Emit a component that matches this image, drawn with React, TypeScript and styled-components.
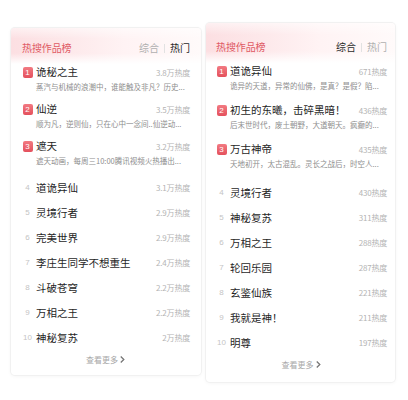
import styled, { createGlobalStyle } from "styled-components";

type Item = {
  title: string;
  heat: string;
  desc?: string;
};

type Layout = {
  top: number;
  width: number;
  padX: number;
  padRight: number;
  headTop: number;
  headH: number;
  rankedH: number;
  descLh: number;
  bottom: number;
};

const LEFT_ITEMS: Item[] = [
  { title: "诡秘之主", heat: "3.8万热度", desc: "蒸汽与机械的浪潮中，谁能触及非凡？历史..." },
  { title: "仙逆", heat: "3.5万热度", desc: "顺为凡，逆则仙，只在心中一念间..仙逆动..." },
  { title: "遮天", heat: "3.2万热度", desc: "遮天动画，每周三10:00腾讯视频火热播出..." },
  { title: "道诡异仙", heat: "3.1万热度" },
  { title: "灵境行者", heat: "2.9万热度" },
  { title: "完美世界", heat: "2.9万热度" },
  { title: "李庄生同学不想重生", heat: "2.4万热度" },
  { title: "斗破苍穹", heat: "2.2万热度" },
  { title: "万相之王", heat: "2.2万热度" },
  { title: "神秘复苏", heat: "2万热度" },
];

const RIGHT_ITEMS: Item[] = [
  { title: "道诡异仙", heat: "671热度", desc: "诡异的天道，异常的仙佛，是真？是假？陷..." },
  { title: "初生的东曦，击碎黑暗！", heat: "436热度", desc: "后末世时代，废土朝野，大道朝天。疯癫的..." },
  { title: "万古神帝", heat: "435热度", desc: "天地初开，太古混乱。灵长之战后，时空人..." },
  { title: "灵境行者", heat: "430热度" },
  { title: "神秘复苏", heat: "311热度" },
  { title: "万相之王", heat: "288热度" },
  { title: "轮回乐园", heat: "287热度" },
  { title: "玄鉴仙族", heat: "221热度" },
  { title: "我就是神！", heat: "211热度" },
  { title: "明尊", heat: "197热度" },
];

const LEFT_LAYOUT: Layout = {
  top: 28,
  width: 190,
  padX: 11,
  padRight: 11,
  headTop: 12,
  headH: 36,
  rankedH: 37,
  descLh: 13,
  bottom: 9,
};

const RIGHT_LAYOUT: Layout = {
  top: 23,
  width: 189,
  padX: 10,
  padRight: 8,
  headTop: 16,
  headH: 40,
  rankedH: 39,
  descLh: 14,
  bottom: 11,
};

const GlobalStyle = createGlobalStyle`
  html, body {
    margin: 0;
    padding: 0;
    background: #fff;
  }
  body {
    font-family: "Noto Sans CJK SC", "Noto Sans", sans-serif;
  }
`;

function RankCard({
  items,
  layout,
  activeTab,
}: {
  items: Item[];
  layout: Layout;
  activeTab: "综合" | "热门";
}) {
  return (
    <Card $l={layout}>
      <Header $l={layout}>
        <HeadTitle>热搜作品榜</HeadTitle>
        <Tabs>
          <Tab $active={activeTab === "综合"}>综合</Tab>
          <Divider />
          <Tab $active={activeTab === "热门"}>热门</Tab>
        </Tabs>
      </Header>

      <List>
        {items.map((it, i) => {
          const top3 = i < 3;
          return (
            <Row key={it.title} $h={top3 ? layout.rankedH : 25} $top3={top3}>
              <MainLine>
                <RankCell>
                  {top3 ? <Badge>{i + 1}</Badge> : <RankNum>{i + 1}</RankNum>}
                </RankCell>
                <Title>{it.title}</Title>
                <Heat>{it.heat}</Heat>
              </MainLine>
              {it.desc && <Desc $lh={layout.descLh}>{it.desc}</Desc>}
            </Row>
          );
        })}
      </List>

      <More>
        查看更多
        <Chevron viewBox="0 0 8 10" aria-hidden>
          <path d="M2 1.5 L5.5 5 L2 8.5" fill="none" stroke="#777" strokeWidth="1.5" />
        </Chevron>
      </More>
    </Card>
  );
}

export default function App() {
  return (
    <>
      <GlobalStyle />
      <Page>
        <RankCard items={LEFT_ITEMS} layout={LEFT_LAYOUT} activeTab="热门" />
        <RankCard items={RIGHT_ITEMS} layout={RIGHT_LAYOUT} activeTab="综合" />
      </Page>
    </>
  );
}

/* --- Styled Components --- */

const Page = styled.div`
  display: flex;
  align-items: flex-start;
  gap: 5px;
  padding-left: 11px;
  width: 408px;
  height: 400px;
  box-sizing: border-box;
  overflow: hidden;
`;

const Card = styled.div<{ $l: Layout }>`
  margin-top: ${({ $l }) => $l.top}px;
  width: ${({ $l }) => $l.width}px;
  box-sizing: border-box;
  padding: 0 ${({ $l }) => $l.padRight}px ${({ $l }) => $l.bottom}px
    ${({ $l }) => $l.padX}px;
  background: #fff;
  border-radius: 4px;
  box-shadow: 0 0 0 1px #f1f1f1, 0 1px 4px rgba(0, 0, 0, 0.05);
  position: relative;
  overflow: hidden;

  &::before {
    content: "";
    position: absolute;
    left: 0;
    right: 0;
    top: 0;
    height: ${({ $l }) => $l.headH}px;
    background:
      linear-gradient(180deg, rgba(255, 255, 255, 0.55) 0%, rgba(255, 255, 255, 0) 30%, rgba(255, 255, 255, 0) 70%, #fff 100%),
      linear-gradient(90deg, #fcdfe2 0%, #fde9eb 32%, #fff3f4 60%, #fffafa 100%);
    pointer-events: none;
  }
`;

const Header = styled.div<{ $l: Layout }>`
  position: relative;
  display: flex;
  align-items: flex-start;
  justify-content: space-between;
  height: ${({ $l }) => $l.headH}px;
  box-sizing: border-box;
  padding-top: ${({ $l }) => $l.headTop}px;
`;

const HeadTitle = styled.div`
  font-size: 10px;
  line-height: 16px;
  color: #e05a65;
  letter-spacing: -0.1px;
`;

const Tabs = styled.div`
  display: flex;
  align-items: center;
  gap: 5px;
  height: 16px;
`;

const Tab = styled.span<{ $active: boolean }>`
  font-size: 10px;
  line-height: 16px;
  color: ${({ $active }) => ($active ? "#2b2b2b" : "#b0b0b0")};
`;

const Divider = styled.span`
  width: 1px;
  height: 9px;
  background: #e2e2e2;
`;

const List = styled.div`
  display: flex;
  flex-direction: column;
`;

const Row = styled.div<{ $h: number; $top3: boolean }>`
  height: ${({ $h }) => $h}px;
  display: flex;
  flex-direction: column;
  justify-content: ${({ $top3 }) => ($top3 ? "flex-start" : "center")};
`;

const MainLine = styled.div`
  display: flex;
  align-items: center;
  height: 16px;
  gap: 3px;
`;

const RankCell = styled.div`
  width: 11px;
  flex-shrink: 0;
  display: flex;
  justify-content: center;
`;

const Badge = styled.span`
  width: 10px;
  height: 11px;
  border-radius: 2px;
  background: linear-gradient(180deg, #f27a82 0%, #e4505c 100%);
  color: #fff;
  font-family: "Liberation Sans", Arial, sans-serif;
  font-size: 8px;
  line-height: 11px;
  text-align: center;
`;

const RankNum = styled.span`
  font-family: "Liberation Sans", Arial, sans-serif;
  font-size: 8px;
  color: #c4c4c4;
`;

const Title = styled.div`
  flex: 1;
  min-width: 0;
  font-size: 10.5px;
  line-height: 16px;
  color: #1f1f1f;
  white-space: nowrap;
`;

const Heat = styled.div`
  flex-shrink: 0;
  font-size: 8px;
  color: #b4b4b4;
  letter-spacing: -0.2px;
`;

const Desc = styled.div<{ $lh: number }>`
  padding-left: 14px;
  font-size: 7.5px;
  line-height: ${({ $lh }) => $lh}px;
  color: #8e8e8e;
  white-space: nowrap;
`;

const More = styled.div`
  margin-top: 2px;
  height: 14px;
  display: flex;
  align-items: center;
  justify-content: center;
  gap: 1px;
  font-size: 8px;
  color: #a8a8a8;
`;

const Chevron = styled.svg`
  width: 7px;
  height: 9px;
`;
